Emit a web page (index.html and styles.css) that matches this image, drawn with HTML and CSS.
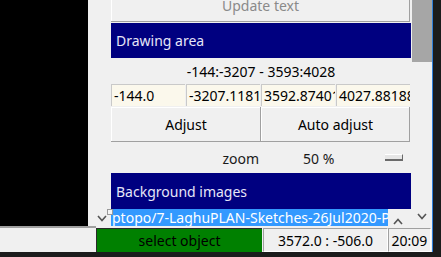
FILE: index.html
```html
<!DOCTYPE html>
<html>
<head>
<meta charset="utf-8">
<link rel="stylesheet" href="styles.css">
</head>
<body>
<div class="app">
  <div class="main">
    <div class="canvas"></div>
    <div class="gutter">
      <svg class="chev" width="10" height="7" viewBox="0 0 10 7"><polyline points="1,1 5,5.5 9,1" fill="none" stroke="#555" stroke-width="1.6"/></svg>
    </div>
    <div class="panel">
      <div class="panel-inner">
        <div class="btn wide disabled">Update text</div>
        <div class="header hdr-draw">Drawing area</div>
        <div class="range">-144:-3207 - 3593:4028</div>
        <div class="entries">
          <div class="entry">-144.0</div>
          <div class="entry">-3207.11811</div>
          <div class="entry">3592.87401</div>
          <div class="entry">4027.881889</div>
        </div>
        <div class="btn-row">
          <div class="btn">Adjust</div>
          <div class="btn">Auto adjust</div>
        </div>
        <div class="zoom-row">
          <div class="zoom-label">zoom</div>
          <div class="option">
            <span class="option-value">50 %</span>
            <span class="indicator"></span>
          </div>
        </div>
        <div class="header hdr-bg">Background images</div>
        <div class="list-row">
          <div class="sel">ptopo/7-LaghuPLAN-Sketches-26Jul2020-P</div>
          <div class="arrow-cell">
            <svg width="10" height="7" viewBox="0 0 10 7"><polyline points="1,6 5,1.5 9,6" fill="none" stroke="#555" stroke-width="1.6"/></svg>
          </div>
        </div>
      </div>
    </div>
    <div class="vscroll">
      <div class="thumb"></div>
      <svg class="chev" width="10" height="7" viewBox="0 0 10 7"><polyline points="1,1 5,5.5 9,1" fill="none" stroke="#555" stroke-width="1.6"/></svg>
    </div>
    <div class="grip"></div>
  </div>
  <div class="status">
    <div class="status-left"></div>
    <div class="cell mode">select object</div>
    <div class="cell coords">3572.0 : -506.0</div>
    <div class="cell clock">20:09</div>
  </div>
</div>
</body>
</html>
```

FILE: styles.css
```css
html, body {
  margin: 0;
  padding: 0;
}
body {
  width: 441px;
  height: 257px;
  overflow: hidden;
  background: #1c1c1c;
  font-family: "Noto Sans", "Open Sans", sans-serif;
  font-size: 14px;
  color: #000;
}
.app {
  width: 433px;
  height: 252px;
  box-sizing: border-box;
  border-right: 1px solid #2f7fd8;
  background: #f0f0f0;
  display: flex;
  flex-direction: column;
}
.main {
  position: relative;
  height: 226px;
  display: flex;
  overflow: hidden;
}
.canvas {
  width: 88px;
  height: 226px;
  background: #000;
}
.gutter {
  width: 23px;
  display: flex;
  flex-direction: column;
  justify-content: flex-end;
  padding-left: 9px;
  padding-bottom: 4px;
  box-sizing: border-box;
}
.chev {
  display: block;
}
.panel {
  width: 300px;
  margin-right: 1px;
  overflow: hidden;
}
.panel-inner {
  margin-top: -10px;
  display: flex;
  flex-direction: column;
}
.btn {
  display: flex;
  align-items: center;
  justify-content: center;
  box-sizing: border-box;
  background: #f0f0f0;
  box-shadow: inset -1px -1px 0 #a0a0a0, inset 1px 1px 0 #ffffff;
}
.wide {
  width: 299px;
  height: 32px;
  padding-bottom: 2px;
}
.disabled {
  color: #8a8a8a;
}
.header {
  background: #000080;
  color: #e6e6f8;
  display: flex;
  align-items: center;
  padding-left: 5px;
}
.hdr-draw {
  margin-top: 1px;
  height: 35px;
}
.hdr-bg {
  height: 36px;
}
.range {
  height: 26px;
  display: flex;
  align-items: center;
  justify-content: center;
}
.entries {
  width: 299px;
  height: 22px;
  display: grid;
  grid-template-columns: repeat(4, 1fr);
  gap: 1px;
}
.entry {
  background: #fbf8ec;
  border-top: 1px solid #c9c9c9;
  border-left: 1px solid #c9c9c9;
  padding-left: 2px;
  overflow: hidden;
  white-space: nowrap;
  line-height: 21px;
}
.btn-row {
  width: 299px;
  margin-top: 1px;
  height: 35px;
  display: grid;
  grid-template-columns: 150px 149px;
}
.zoom-row {
  height: 31px;
  display: grid;
  grid-template-columns: 150px 149px;
  align-items: center;
  color: #1a1a1a;
}
.zoom-label {
  text-align: right;
  padding-right: 2px;
  padding-top: 2px;
}
.option {
  display: flex;
  align-items: center;
  padding-left: 42px;
  padding-top: 2px;
}
.option-value {
  width: 82px;
}
.indicator {
  width: 18px;
  height: 7px;
  box-sizing: border-box;
  background: #e6e6e6;
  border-top: 1px solid #ffffff;
  border-bottom: 2px solid #6a6a6a;
  border-right: 1px solid #6a6a6a;
  margin-top: -3px;
}
.list-row {
  height: 18px;
  display: flex;
}
.sel {
  width: 277px;
  background: #3399ff;
  color: #fff;
  white-space: nowrap;
  overflow: hidden;
  line-height: 18px;
  padding-left: 1px;
  box-sizing: border-box;
}
.arrow-cell {
  flex: 1;
  display: flex;
  justify-content: center;
  padding-top: 9px;
  padding-right: 3px;
}
.vscroll {
  width: 20px;
  display: flex;
  flex-direction: column;
  justify-content: space-between;
  align-items: center;
  padding-bottom: 6px;
  box-sizing: border-box;
}
.thumb {
  width: 20px;
  height: 62px;
  background: #a6a6a6;
}
.grip {
  position: absolute;
  left: 107px;
  top: 209px;
  width: 4px;
  height: 4px;
  background: #f4f4f4;
  border: 1px solid #9a9a9a;
}
.status {
  height: 26px;
  display: flex;
  background: #f0f0f0;
}
.status-left {
  width: 96px;
  box-sizing: border-box;
  border-top: 2px solid #a0a0a0;
}
.cell {
  margin-top: 2px;
  height: 24px;
  box-sizing: border-box;
  display: flex;
  align-items: center;
  justify-content: center;
  white-space: nowrap;
}
.mode {
  width: 166px;
  background: #008000;
  border-left: 1px solid #2a2a2a;
  border-top: 1px solid #2a2a2a;
  color: #000;
}
.coords {
  width: 125px;
  margin-left: 1px;
  border: 1px solid #ffffff;
  border-top-color: #a0a0a0;
  border-left-color: #a0a0a0;
}
.clock {
  width: 43px;
  border: 1px solid #ffffff;
  border-top-color: #a0a0a0;
  border-left-color: #a0a0a0;
}
```
